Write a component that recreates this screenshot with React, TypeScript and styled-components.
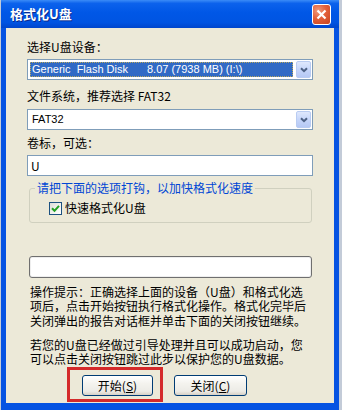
import React from "react";
import styled, { createGlobalStyle } from "styled-components";

const cjk = `"Noto Sans CJK SC", "Noto Sans", sans-serif`;
const latin = `"Liberation Sans", Arial, sans-serif`;

// estilo global da página
const GlobalStyle = createGlobalStyle`
  html, body {
    margin: 0;
    padding: 0;
    background: #c3cbd8;
  }
  body {
    width: 342px;
    height: 410px;
    overflow: hidden;
    font-family: ${cjk};
  }
`;

const Window = styled.div`
  width: 338px;
  margin-left: 1px;
  display: flex;
  flex-direction: column;
`;

const TitleBar = styled.div`
  height: 28px;
  box-sizing: border-box;
  display: flex;
  align-items: center;
  justify-content: space-between;
  padding: 0 8px 0 9px;
  background: linear-gradient(
    180deg,
    #3b8cf7 0%,
    #0c62ec 12%,
    #0057e6 45%,
    #0054e2 80%,
    #0046cc 100%
  );
`;

const Title = styled.span`
  color: #fff;
  font: bold 13px/16px ${cjk};
  text-shadow: 1px 1px 0 #0a2a8c;
`;

const CloseButton = styled.div`
  width: 19px;
  height: 21px;
  box-sizing: border-box;
  border: 1px solid #fff;
  border-radius: 3px;
  background: radial-gradient(circle at 30% 30%, #f09a7c 0%, #e2603a 45%, #c9431d 100%);
  display: flex;
  align-items: center;
  justify-content: center;
`;

const Frame = styled.div`
  background: #ece9d8;
  border: 5px solid #0553e2;
  border-top: 0;
  border-bottom-width: 7px;
  padding: 12px 21px 1px 21px;
  display: flex;
  flex-direction: column;
`;

const Label = styled.div<{ $top: number }>`
  margin-top: ${(p) => p.$top}px;
  font: 12px/14px ${cjk};
  color: #000;
  white-space: nowrap;
`;

const SelectBox = styled.div<{ $top: number }>`
  margin-top: ${(p) => p.$top}px;
  height: 21px;
  box-sizing: border-box;
  border: 1px solid #7f9db9;
  background: #fff;
  display: flex;
  align-items: center;
  padding: 1px 1px 1px 2px;
`;

const Field = styled.div<{ $selected?: boolean }>`
  flex: 1;
  height: 15px;
  box-sizing: border-box;
  display: flex;
  align-items: center;
  padding-left: 2px;
  font: 11px/15px ${latin};
  color: ${(p) => (p.$selected ? "#fff" : "#000")};
  background: ${(p) => (p.$selected ? "#316ac5" : "transparent")};
  outline: ${(p) => (p.$selected ? "1px dotted #b8a860" : "none")};
  outline-offset: -1px;
  white-space: pre;
`;

const Capacity = styled.span`
  margin-left: 19px;
`;

const DropButton = styled.div`
  width: 15px;
  height: 17px;
  margin-left: 3px;
  box-sizing: border-box;
  border: 1px solid #b9ccf2;
  border-radius: 2px;
  background: linear-gradient(180deg, #dfe8fd 0%, #c6d6fa 50%, #b6c9f5 100%);
  display: flex;
  align-items: center;
  justify-content: center;
`;

const TextBox = styled.div`
  margin-top: 5px;
  height: 21px;
  box-sizing: border-box;
  border: 1px solid #7f9db9;
  background: #fff;
  padding-left: 3px;
  font: 12px/19px ${cjk};
  color: #000;
`;

const Group = styled.fieldset`
  margin: 5px 1px 0 2px;
  padding: 6px 0 7px 0;
  border: 1px solid #d0d0bf;
  border-radius: 3px;
  min-inline-size: 0;
`;

const Legend = styled.legend`
  margin-left: 5px;
  padding: 0 2px;
  font: 12px/14px ${cjk};
  color: #0046d5;
`;

const CheckRow = styled.div`
  display: flex;
  align-items: center;
  gap: 3px;
  padding-left: 19px;
  font: 12px/14px ${cjk};
  color: #000;
`;

const CheckBox = styled.div`
  width: 13px;
  height: 13px;
  box-sizing: border-box;
  border: 1px solid #1c5180;
  background: linear-gradient(135deg, #dcdcd7 0%, #f7f7f4 70%, #fff 100%);
  display: flex;
  align-items: center;
  justify-content: center;
`;

const Progress = styled.div`
  margin: 33px 1px 0 2px;
  height: 22px;
  box-sizing: border-box;
  border: 1px solid #6f6f6f;
  border-radius: 3px;
  background: #fff;
  box-shadow: inset 0 0 0 1px #eeeeee;
`;

const Hint = styled.div<{ $top: number }>`
  margin: ${(p) => p.$top}px 0 0 3px;
  font: 12px/14.5px ${cjk};
  color: #000;
  white-space: nowrap;
`;

const ButtonRow = styled.div`
  margin-top: 0.5px;
  display: flex;
  align-items: flex-start;
`;

const Highlight = styled.div`
  margin-left: 40px;
  width: 96px;
  height: 35px;
  box-sizing: border-box;
  border: 3px solid #d42a2a;
  padding: 5px 0 0 12px;
`;

const Button = styled.div<{ $width: number; $top?: number }>`
  width: ${(p) => p.$width}px;
  height: 21px;
  margin-top: ${(p) => p.$top ?? 0}px;
  box-sizing: border-box;
  border: 1px solid #003c74;
  border-radius: 3px;
  background: linear-gradient(180deg, #ffffff 0%, #f4f3ee 40%, #ecebe6 80%, #d6d0c5 100%);
  display: flex;
  align-items: center;
  justify-content: center;
  font: 12px/14px ${cjk};
  color: #000;
`;

const CloseButtonSpacer = styled.div`
  margin-left: 11px;
`;

const hint1 = [
  "操作提示：正确选择上面的设备（U盘）和格式化选",
  "项后，点击开始按钮执行格式化操作。格式化完毕后",
  "关闭弹出的报告对话框并单击下面的关闭按钮继续。",
];

const hint2 = [
  "若您的U盘已经做过引导处理并且可以成功启动，您",
  "可以点击关闭按钮跳过此步以保护您的U盘数据。",
];

const Chevron = () => (
  <svg width="8" height="6" viewBox="0 0 8 6">
    <path d="M1 1.2 L4 4.2 L7 1.2" fill="none" stroke="#4d6185" strokeWidth="2" />
  </svg>
);

const App = () => {
  return (
    <>
      <GlobalStyle />
      <Window>
        <TitleBar>
          <Title>格式化U盘</Title>
          <CloseButton>
            <svg width="11" height="11" viewBox="0 0 11 11">
              <path d="M1.5 1.5 L9.5 9.5 M9.5 1.5 L1.5 9.5" stroke="#fff" strokeWidth="2.2" />
            </svg>
          </CloseButton>
        </TitleBar>
        <Frame>
          <Label $top={0}>选择U盘设备：</Label>
          <SelectBox $top={5}>
            <Field $selected>
              {"Generic  Flash Disk"}
              <Capacity>8.07 (7938 MB) (I:\)</Capacity>
            </Field>
            <DropButton>
              <Chevron />
            </DropButton>
          </SelectBox>

          <Label $top={9}>文件系统，推荐选择 FAT32</Label>
          <SelectBox $top={6}>
            <Field>FAT32</Field>
            <DropButton>
              <Chevron />
            </DropButton>
          </SelectBox>

          <Label $top={6}>卷标，可选：</Label>
          <TextBox>U</TextBox>

          <Group>
            <Legend>请把下面的选项打钩，以加快格式化速度</Legend>
            <CheckRow>
              <CheckBox>
                <svg width="9" height="9" viewBox="0 0 9 9">
                  <path d="M1 4.2 L3.5 6.8 L8 1.8" fill="none" stroke="#21a121" strokeWidth="2" />
                </svg>
              </CheckBox>
              快速格式化U盘
            </CheckRow>
          </Group>

          <Progress />

          <Hint $top={6.5}>
            {hint1.map((l) => (
              <div key={l}>{l}</div>
            ))}
          </Hint>
          <Hint $top={9.5}>
            {hint2.map((l) => (
              <div key={l}>{l}</div>
            ))}
          </Hint>

          <ButtonRow>
            <Highlight>
              <Button $width={71}>
                开始(<u>S</u>)
              </Button>
            </Highlight>
            <CloseButtonSpacer>
              <Button $width={73} $top={8}>
                关闭(<u>C</u>)
              </Button>
            </CloseButtonSpacer>
          </ButtonRow>
        </Frame>
      </Window>
    </>
  );
};

export default App;
